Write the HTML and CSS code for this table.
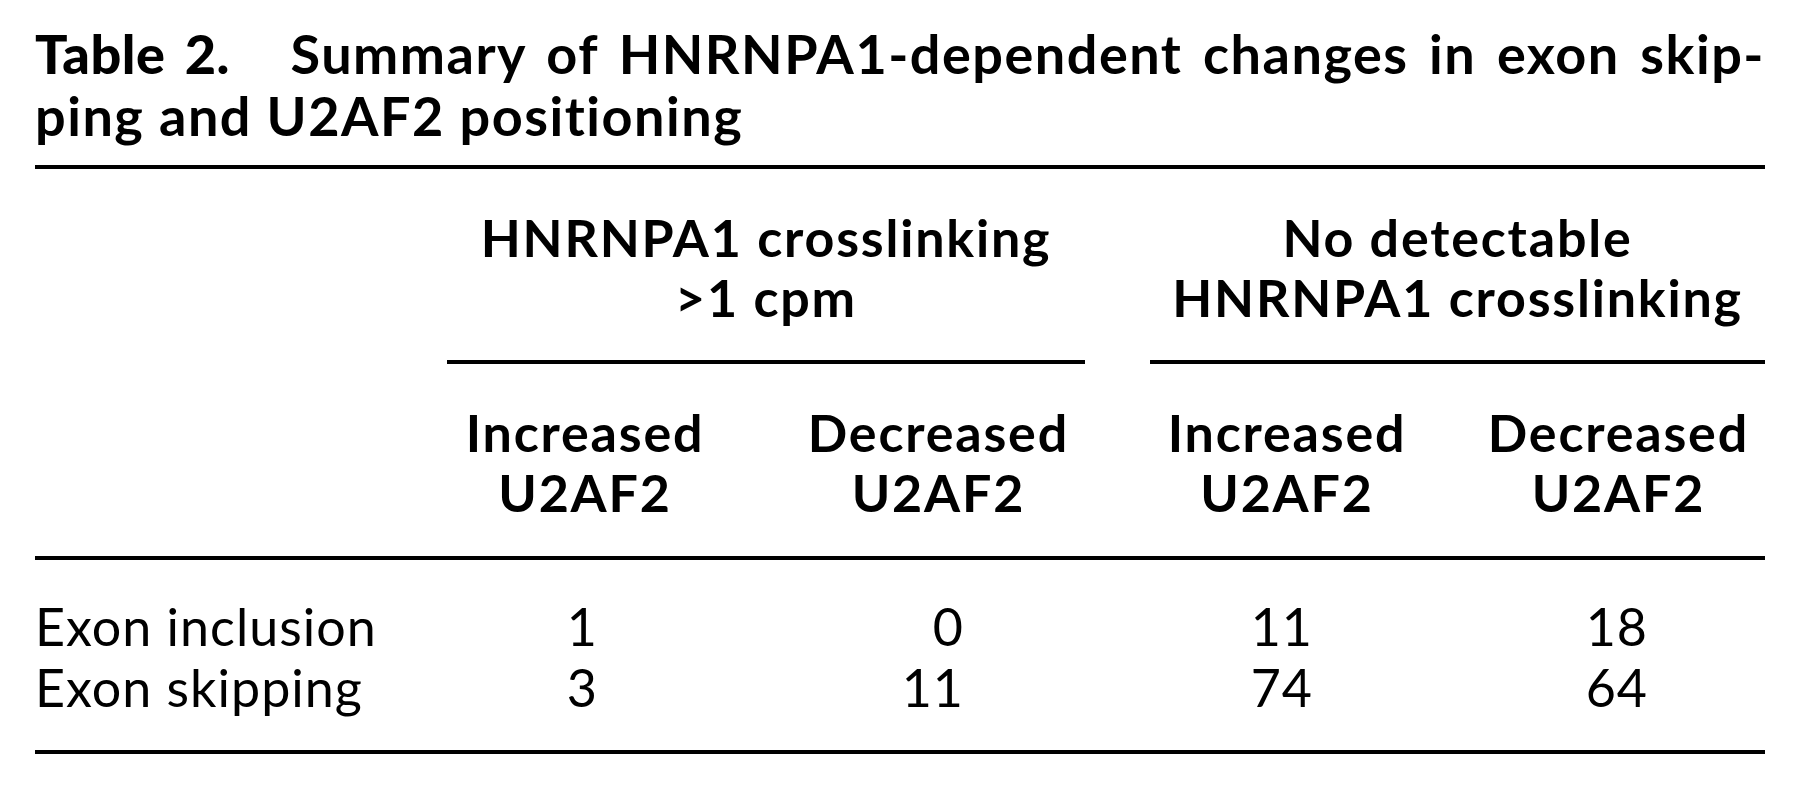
FILE: index.html
```html
<!DOCTYPE html>
<html lang="en">
<head>
<meta charset="utf-8">
<title>Table 2</title>
<link rel="stylesheet" href="styles.css">
</head>
<body>
<div class="page">
  <div class="title">
    <div class="title-line first"><span class="label">Table 2.</span> Summary of HNRNPA1-dependent changes in exon skip-</div>
    <div class="title-line">ping and U2AF2 positioning</div>
  </div>
  <div class="tbl">
    <div class="rule"></div>

    <div class="stub"></div>
    <div class="grp g1">HNRNPA1 crosslinking<br>&gt;1 cpm</div>
    <div class="grp g2">No detectable<br>HNRNPA1 crosslinking</div>

    <div class="stub"></div>
    <div class="colhead c1"><span class="hd">Increased<br>U2AF2</span></div>
    <div class="colhead c2"><span class="hd">Decreased<br>U2AF2</span></div>
    <div class="spacer"></div>
    <div class="colhead c3"><span class="hd">Increased<br>U2AF2</span></div>
    <div class="colhead c4"><span class="hd">Decreased<br>U2AF2</span></div>

    <div class="rule"></div>

    <div class="stub-label row-a">Exon inclusion</div>
    <div class="num c1 row-a">1</div>
    <div class="num c2 row-a">0</div>
    <div class="spacer"></div>
    <div class="num c3 row-a">11</div>
    <div class="num c4 row-a">18</div>

    <div class="stub-label row-b">Exon skipping</div>
    <div class="num c1 row-b">3</div>
    <div class="num c2 row-b">11</div>
    <div class="spacer"></div>
    <div class="num c3 row-b">74</div>
    <div class="num c4 row-b">64</div>

    <div class="rule"></div>
  </div>
</div>
</body>
</html>
```

FILE: styles.css
```css
html, body {
  margin: 0;
  padding: 0;
  background: #ffffff;
}

body {
  font-family: Lato, "Noto Sans", sans-serif;
  color: #000000;
  font-size: 52px;
  letter-spacing: 1px;
  font-variant-ligatures: none;
}

.page {
  width: 1730px;
  padding: 23px 35px 0 35px;
}

.title {
  font-size: 54px;
  font-weight: 700;
  line-height: 62px;
  letter-spacing: 1.5px;
  margin-bottom: 18px;
}

.title-line.first {
  text-align: justify;
  text-align-last: justify;
}

.title .label {
  font-weight: 900;
  letter-spacing: 0.5px;
  margin-right: 40px;
}

.tbl {
  display: grid;
  grid-template-columns: 412px 276px 362px 65px 274px 341px;
}

.rule {
  grid-column: 1 / -1;
  height: 4px;
  background: #000000;
}

.grp {
  font-weight: 700;
  letter-spacing: 1.8px;
  text-align: center;
  line-height: 60px;
  padding: 38px 0 33px;
  border-bottom: 4px solid #000000;
}

.g1 {
  grid-column: 2 / 4;
}

.g2 {
  grid-column: 5 / 7;
}

.stub {
  grid-column: 1;
}

.colhead {
  font-weight: 700;
  letter-spacing: 1.8px;
  line-height: 60px;
  padding: 38px 0 34px;
}

.colhead .hd {
  display: inline-block;
  text-align: center;
}

.colhead.c1,
.colhead.c3 {
  text-align: center;
}

.colhead.c2,
.colhead.c4 {
  text-align: right;
  padding-right: 16px;
}

.stub-label {
  grid-column: 1;
  line-height: 61px;
  white-space: nowrap;
}

.num {
  line-height: 61px;
  text-align: right;
}

.num.c1 { padding-right: 125px; }
.num.c2 { padding-right: 121px; }
.num.c3 { padding-right: 111px; }
.num.c4 { padding-right: 117px; }

.row-a {
  padding-top: 36px;
}

.row-b {
  padding-bottom: 32px;
}
```
